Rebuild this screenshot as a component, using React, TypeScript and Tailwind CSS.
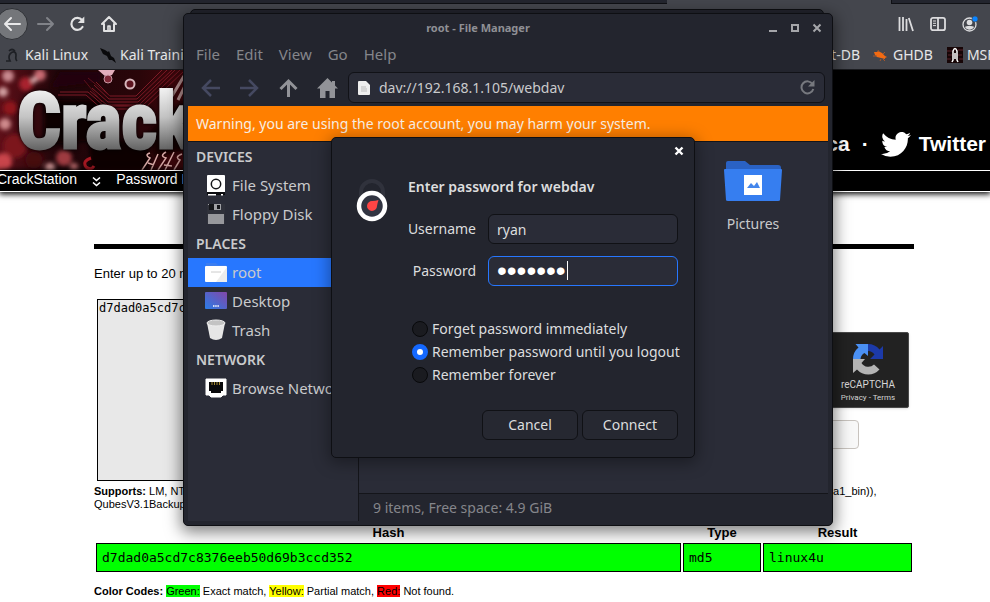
import React from "react";

const ui = "font-['Noto_Sans',sans-serif]";
const arial = "font-['Liberation_Sans',Arial,sans-serif]";
const mono = "font-['DejaVu_Sans_Mono',monospace]";

function BrowserChrome() {
  return (
    <div className={`${ui} bg-[#44464d] text-[#e6e6e8]`}>
      <div className="flex h-1">
        <div className="flex-1 border-b border-[#0f1014] bg-[#23252e]" />
        <div className="w-[224px] bg-[#44464d]" />
        <div className="w-[99px] border-b border-l border-[#0f1014] bg-[#23252e]" />
      </div>
      <div className="flex h-10 items-center justify-between">
        <div className="flex items-center">
          <button aria-label="Back" className="-ml-1 flex size-8 items-center justify-center rounded-full border border-[#2f3136] bg-[#74767a]">
            <svg width="18" height="16" viewBox="0 0 18 16" fill="none" stroke="#e9e9ea" strokeWidth="2" strokeLinecap="round" strokeLinejoin="round"><path d="M17 8H2M8 2L2 8l6 6" /></svg>
          </button>
          <button aria-label="Forward" className="flex size-8 items-center justify-center pl-1">
            <svg width="18" height="16" viewBox="0 0 18 16" fill="none" stroke="#818389" strokeWidth="2" strokeLinecap="round" strokeLinejoin="round"><path d="M1 8h15M10 2l6 6-6 6" /></svg>
          </button>
          <button aria-label="Reload" className="flex size-8 items-center justify-center pl-0.5">
            <svg width="18" height="18" viewBox="0 0 18 18"><path d="M14 5A6 6 0 1 0 14.500 12" fill="none" stroke="#e2e2e3" strokeWidth="2.200" strokeLinecap="round" /><path d="M16.300 1.500v6.500H9.800z" fill="#e2e2e3" /></svg>
          </button>
          <button aria-label="Home" className="flex size-8 items-center justify-center pl-0.5">
            <svg width="18" height="18" viewBox="0 0 18 18" fill="none" stroke="#e2e2e3" strokeWidth="2" strokeLinecap="round" strokeLinejoin="round"><path d="M2 9l7-7 7 7M4 9v7h10V9" /><path d="M8 15v-4h2v4" strokeWidth="1.6" /></svg>
          </button>
        </div>
        <div className="flex items-center gap-4 pr-3">
          <button aria-label="Library">
            <svg width="16" height="16" viewBox="0 0 16 16" stroke="#dcdcde" strokeWidth="1.8"><path d="M1.500 1v14M5 1v14M8.500 3v12M10.800 2l4.200 13" /></svg>
          </button>
          <button aria-label="Sidebars">
            <svg width="16" height="16" viewBox="0 0 16 16" fill="none" stroke="#dcdcde" strokeWidth="1.8"><rect x="1" y="1.800" width="14" height="12.400" rx="2" /><path d="M8 2v12" /><path d="M3 5h3M3 7.300h3M3 9.600h3" strokeWidth="1" /></svg>
          </button>
          <button aria-label="Account">
            <svg width="16" height="16" viewBox="0 0 16 16"><circle cx="7.500" cy="8.500" r="6.500" fill="none" stroke="#dcdcde" strokeWidth="1.300" /><circle cx="7.500" cy="6.500" r="2.800" fill="#dcdcde" /><path d="M3 11c1-1.300 8-1.300 9 0-2 3.600-7 3.600-9 0z" fill="#dcdcde" /><circle cx="13" cy="3" r="3" fill="#0a84ff" stroke="#44464d" strokeWidth=".6" /></svg>
          </button>
        </div>
      </div>
      <div className="flex h-[26px] items-center justify-between overflow-hidden border-b border-[#1b1c20] pb-[3px] text-sm leading-5 whitespace-nowrap">
        <div className="flex items-center">
          <a href="#kali" className="flex items-center gap-[5px] pl-1">
            <svg width="16" height="16" viewBox="0 0 16 16" fill="none" stroke="#1e2025" strokeWidth="1.700"><path d="M2 14h4q-2-4 0-7c2-3 6-3 6 1 0 3-1 4 1 6M5 4q3-3 6 0" /></svg>
            Kali Linux
          </a>
          <a href="#training" className="flex items-center gap-1 pl-3">
            <svg width="16" height="16" viewBox="0 0 16 16" fill="#09090b"><path d="M0 1l5 2 3 2 1-1 2 5 3 2 2 5-4-3-3 0-2-4-4-2z" /></svg>
            Kali Training
          </a>
        </div>
        <div className="flex w-[205px] items-center">
          <span className="w-[75px] shrink-0 text-right">Exploit-DB</span>
          <a href="#ghdb" className="flex shrink-0 items-center gap-[5px] pl-3">
            <svg width="16" height="16" viewBox="0 0 16 16"><path d="M2 5l3 0 1-1 4 2 3 3 2 1-2 1 0 1-4-1-4-1-2-2z" fill="#f26a12" /><path d="M1 9h4M8 14l1-2M13 5l-2 2M6 3l1 2M13 14l-2-2" stroke="#a5572c" /></svg>
            GHDB
          </a>
          <a href="#msfu" className="flex shrink-0 items-center gap-1 pl-[14px]">
            <svg width="16" height="16" viewBox="0 0 16 16"><path fill="#160506" d="M0 0h16v16H0z" /><path stroke="#59232a" d="M0 4h5M1 8h4M11 3h5M11 8h4M0 12h4M12 12h4" /><path d="M5 15l1-2V4q2-5 4 0v9l1 2M8 6v6" stroke="#fff" strokeWidth="1.500" fill="none" /></svg>
            MSFU
          </a>
        </div>
      </div>
    </div>
  );
}

function BannerArt() {
  return (
    <svg width="200" height="100" viewBox="0 0 200 100" aria-label="CrackStation" role="img">
      <defs>
        <linearGradient id="board" x1="0" x2="1"><stop stopColor="#5e0f18" /><stop offset=".3" stopColor="#1c0408" /><stop offset=".7" stopColor="#2a0509" /><stop offset="1" stopColor="#4a080d" /></linearGradient>
        <linearGradient id="steel" gradientUnits="userSpaceOnUse" x1="0" y1="20" x2="0" y2="80"><stop stopColor="#f0f0f0" /><stop offset=".45" stopColor="#c4c4c4" /><stop offset="1" stopColor="#636363" /></linearGradient>
        <filter id="soft"><feGaussianBlur stdDeviation="2.200" /></filter>
      </defs>
      <rect width="200" height="100" fill="url(#board)" />
      <g filter="url(#soft)">
        <circle cx="8" cy="6" r="6" fill="#c98a90" /><circle cx="26" cy="14" r="7" fill="#a8242e" />
        <circle cx="3" cy="22" r="5" fill="#d2a0a2" /><circle cx="40" cy="5" r="6" fill="#c86a72" />
        <circle cx="34" cy="10" r="3" fill="#e0b4b6" /><circle cx="10" cy="38" r="7" fill="#90161f" />
        <circle cx="5" cy="54" r="6" fill="#cf8a8c" /><circle cx="15" cy="76" r="12" fill="#7c141c" />
        <circle cx="3" cy="92" r="9" fill="#c9444c" /><circle cx="34" cy="90" r="9" fill="#47070d" />
        <circle cx="64" cy="88" r="8" fill="#9e3a40" /><circle cx="50" cy="98" r="5" fill="#d69b9b" />
        <circle cx="74" cy="97" r="4" fill="#bb6a6c" />
        <path d="M44 30h60v40l-60 4z" fill="#0c0204" />
        <path d="M90 70h60v30H90z" fill="#0c0204" />
        <path d="M60 2l40 0 0 10-50 6z" fill="#240408" />
        <path d="M150 60l34-30v50l-30 8z" fill="#150306" />
      </g>
      <g fill="none" stroke="#7d1a26" strokeWidth="1">
        <path d="M96 12l14 14h26l26-26M94 15l15 14h28l30-29M92 18l16 14h30l34-32M90 21l17 14h32l36-35M60 22h28l16 14h38l38-36M58 25h28l16 14h42l40-38" />
        <path d="M84 10l18 22M88 8l22 18" stroke="#5c101a" />
      </g>
      <path d="M98 0l8 7 6-2 3-5z" fill="#e4aebb" />
      <circle cx="108" cy="9" r="4" fill="#7e2735" stroke="#c998a4" />
      <circle cx="130" cy="14" r="4.500" fill="#5e1520" stroke="#d6b6bb" strokeWidth="2" />
      <path d="M172 26l12-20M178 30l8-16" stroke="#b99494" strokeWidth="3" />
      <path d="M91 88q-9 3-5 9 5 4 8-1" fill="none" stroke="#a51822" strokeWidth="3" />
      <g fill="none" stroke="#d8a9a6" strokeWidth="1.500"><path d="M150 83q-6 2 0 5l-8 12M158 84l-7 16M166 82q-7 4 0 6l-8 12M174 82l-9 18M182 84q-8 3-2 6l-6 10M148 93l6 2M164 95l8 1" /></g>
      <text x="17" y="78" fontSize="77" fontWeight="700" fill="url(#steel)" stroke="url(#steel)" strokeWidth="3" className="font-['Liberation_Sans_Narrow','Roboto_Condensed','Open_Sans_Condensed',sans-serif] drop-shadow-[0_0_2px_#000]">Crack</text>
    </svg>
  );
}

function SiteHeader() {
  return (
    <header className={`${arial} bg-black text-white`}>
      <div className="flex h-[100px] items-center justify-between">
        <BannerArt />
        <div className="flex items-center gap-3 pt-12 pr-1 text-[21px] leading-6 font-bold">
          <a href="#defuse">Defuse.ca</a>
          <span>·</span>
          <a href="#twitter" className="flex items-center gap-2">
            <svg width="30" height="25" viewBox="0 0 24 20" fill="#fff"><path d="M24 2.400a9.800 9.800 0 0 1-2.800.8A4.900 4.900 0 0 0 23.300.5a9.900 9.900 0 0 1-3.100 1.200A4.900 4.900 0 0 0 11.800 6.200 14 14 0 0 1 1.700 1a4.900 4.900 0 0 0 1.500 6.600A4.900 4.900 0 0 1 1 7v.1a4.900 4.900 0 0 0 3.900 4.800 4.900 4.900 0 0 1-2.200.1 4.900 4.900 0 0 0 4.600 3.400A9.900 9.900 0 0 1 0 17.500 14 14 0 0 0 7.500 19.700c9.100 0 14-7.500 14-14v-.7A10 10 0 0 0 24 2.400z" /></svg>
            Twitter
          </a>
        </div>
      </div>
      <nav className="relative flex h-[22px] items-center border-y border-white bg-black text-sm leading-4 whitespace-nowrap shadow-[0_1px_6px_1px_#000]">
        <a href="#crackstation" className="-ml-[3px] pb-1">CrackStation</a>
        <svg className="mx-[15px]" width="9" height="11" viewBox="0 0 9 11" fill="none" stroke="#fff" strokeWidth="1.600"><path d="M1 1.500l3.500 3 3.500-3M1 6.500l3.500 3 3.500-3" /></svg>
        <a href="#hashing" className="pb-1">Password Hashing Security</a>
      </nav>
    </header>
  );
}

function CrackForm() {
  return (
    <form className="mt-[15px] flex justify-between pr-[5px] pl-[3px]" onSubmit={(e) => e.preventDefault()}>
      <textarea id="hashes" defaultValue="d7dad0a5cd7c8376eeb50d69b3ccd352" className={`${mono} block h-[182px] w-[480px] resize-none border border-black bg-[#e8e8e8] px-px py-px text-xs leading-[14px] text-black outline-none`} />
      <div className="flex w-[304px] flex-col items-center pt-[33px]">
        <div className="flex h-[76px] w-full flex-col items-end rounded-xs border border-[#4a4a4a] bg-[#222] text-[#d6d6d6] shadow-sm">
          <div className="flex w-20 flex-col items-center pt-[10px] font-['Roboto',sans-serif]">
            <svg width="32" height="32" viewBox="0 0 32 32">
              <path d="M16 1a15 15 0 0 1 11.500 5.500L31 3v13H18l4.500-4.500A8 8 0 0 0 16 8z" fill="#1c3aa9" />
              <path d="M16 1v12l-3.500-3A8 8 0 0 0 8.500 16H1A15 15 0 0 1 6.500 4.500L3.500 1z" fill="#4a90f4" />
              <path d="M1 16h12l-3.500 4a8 8 0 0 0 12.500 1.500l5.500 5A15 15 0 0 1 5 26.500L1 30z" fill="#b4b4b4" />
            </svg>
            <span className="mt-1 text-[10px] leading-3">reCAPTCHA</span>
            <span className="text-[8px] leading-[14px] whitespace-nowrap">
              <a href="#privacy">Privacy</a> - <a href="#terms">Terms</a>
            </span>
          </div>
        </div>
        <button className="mt-3 h-[29px] w-[204px] rounded-[4px] border border-[#c8c3be] bg-[#f8f8f8] text-[13px] text-black">Crack Hashes</button>
      </div>
    </form>
  );
}

function CrackPage() {
  const cell = "h-[29px] border border-black bg-[#00ff00] px-[5px] py-0";
  return (
    <main className={`${arial} bg-white pr-[76px] pl-[94px] text-black`}>
      <div className="h-[52px]" />
      <hr className="h-[5px] border-0 bg-black" />
      <label htmlFor="hashes" className="mt-[15px] block text-[13px] leading-5">Enter up to 20 non-salted hashes, one per line:</label>
      <CrackForm />
      <p className="mt-1 text-[11px] leading-[13px]">
        <b>Supports:</b> LM, NTLM, md2, md4, md5, md5(md5_hex), md5-half, sha1, sha224, sha256, sha384, sha512, ripeMD160, whirlpool, MySQL 4.1+ (sha1(sha1_bin)), QubesV3.1BackupDefaults
      </p>
      <table className="mt-[11px] w-full table-fixed border-separate border-spacing-[2px]">
        <colgroup>
          <col />
          <col className="w-[78px]" />
          <col className="w-[149px]" />
        </colgroup>
        <thead>
          <tr className="text-[13px] leading-[17px]">
            <th className="p-0">Hash</th>
            <th className="p-0">Type</th>
            <th className="p-0">Result</th>
          </tr>
        </thead>
        <tbody>
          <tr className={`${mono} text-[13px] leading-4`}>
            <td className={cell}>d7dad0a5cd7c8376eeb50d69b3ccd352</td>
            <td className={cell}>md5</td>
            <td className={cell}>linux4u</td>
          </tr>
        </tbody>
      </table>
      <p className="mt-[9px] text-[11px] leading-4">
        <b>Color Codes:</b> <span className="bg-[#00ff00]">Green:</span> Exact match, <span className="bg-[#ffff00]">Yellow:</span> Partial match, <span className="bg-[#ff0000]">Red:</span> Not found.
      </p>
    </main>
  );
}

const DriveIcon = () => (
  <svg width="22" height="22" viewBox="0 0 22 22"><rect x="2" y="1" width="18" height="18" rx="1" fill="#fff" /><circle cx="11" cy="10" r="4.700" fill="none" stroke="#15161a" strokeWidth="1.500" /><path d="M2 18h18v3H2z" fill="#0c0d10" /><path d="M3 20h8v1.500H3zM16 20h2v1.500h-2z" fill="#fff" /></svg>
);
const FloppyIcon = () => (
  <svg width="22" height="22" viewBox="0 0 22 22"><path d="M2 1h18v20H2z" fill="#2f313a" /><path d="M3 1h1v1H3zM8 1h8v6H8z" fill="#a0a1a5" /><path d="M4 1h5v6H4zM12 2h3v4h-3z" fill="#15161a" /><rect x="3" y="11" width="16" height="10" fill="#97989c" /></svg>
);
const FolderIcon = () => (
  <svg width="22" height="22" viewBox="0 0 22 22"><path d="M1 2h10l2 2h8v3H1z" fill="#3b7df0" /><rect y="5" width="22" height="16" rx="1" fill="#fff" /><path d="M22 6v15H11z" fill="#ececec" /><path d="M6 11h10" stroke="#ccc" /></svg>
);
const DesktopIcon = () => (
  <svg width="22" height="22" viewBox="0 0 22 22"><defs><linearGradient id="desk" x1="0" y1="1" x2="1" y2="0"><stop stopColor="#2a7de8" /><stop offset="1" stopColor="#8347a8" /></linearGradient></defs><rect y="2" width="22" height="17" rx="1" fill="url(#desk)" /><path d="M8 16h6" stroke="#fff" strokeWidth="1.500" strokeDasharray="1.500 .7" /></svg>
);
const TrashIcon = () => (
  <svg width="22" height="22" viewBox="0 0 22 22"><path d="M2 4l3 15q6 4 12 0l3-15z" fill="#e6e6e6" /><ellipse cx="11" cy="4" rx="9" ry="3" fill="#c3c3c3" stroke="#eee" /></svg>
);
const NetworkIcon = () => (
  <svg width="22" height="22" viewBox="0 0 22 22"><path d="M1 2h20v16h-3l-2 2H6l-2-2H1z" fill="#fff" stroke="#fff" strokeLinejoin="round" /><path d="M4 5h14v9h-2v2H6v-2H4z" fill="#09090b" /><path d="M7 5v3M9.500 5v3M12 5v3M14.500 5v3" stroke="#a58a32" /></svg>
);

type Entry = { label: string; icon?: React.ReactNode; selected?: boolean };
const places: Entry[] = [
  { label: "DEVICES" },
  { label: "File System", icon: <DriveIcon /> },
  { label: "Floppy Disk", icon: <FloppyIcon /> },
  { label: "PLACES" },
  { label: "root", icon: <FolderIcon />, selected: true },
  { label: "Desktop", icon: <DesktopIcon /> },
  { label: "Trash", icon: <TrashIcon /> },
  { label: "NETWORK" },
  { label: "Browse Network", icon: <NetworkIcon /> },
];

function Sidebar() {
  return (
    <aside className="w-[171px] shrink-0 overflow-hidden border-r border-[#14151a] bg-[#2a2c37] text-[15px] whitespace-nowrap">
      {places.map((p) =>
        p.icon ? (
          <button key={p.label} className={`flex h-[29px] w-full items-center gap-[5px] pb-0.5 pl-[17px] ${p.selected ? "bg-[#2777ff]" : ""}`}>
            {p.icon}
            {p.label}
          </button>
        ) : (
          <h2 key={p.label} className="h-[29px] pl-2 text-sm leading-[29px] font-semibold">{p.label}</h2>
        ),
      )}
    </aside>
  );
}

function FileManager() {
  return (
    <section className={`${ui} absolute top-[13px] left-[183px] flex h-[513px] w-[650px] flex-col rounded-[5px] border border-[#0e0f13] bg-[#23252e] px-1 pb-1 text-sm leading-5 text-[#c9cacc] shadow-[0_4px_16px_2px_rgba(0,0,0,0.5)]`}>
      <div className="flex h-[27px] items-center text-[11px] font-bold text-[#8f9095]">
        <h1 className="flex-1 text-center">root - File Manager</h1>
        <div className="flex items-center gap-3 pr-1.5">
          <button aria-label="Minimize"><svg width="10" height="10" viewBox="0 0 10 10"><path d="M1 7h8v2H1z" fill="#a5a6aa" /></svg></button>
          <button aria-label="Maximize"><svg width="10" height="10" viewBox="0 0 10 10"><path d="M2 2h6v6H2z" fill="none" stroke="#a5a6aa" strokeWidth="2" /></svg></button>
          <button aria-label="Close"><svg width="10" height="10" viewBox="0 0 10 10"><path d="M1.500 1.500l7 7M8.500 1.500l-7 7" stroke="#a5a6aa" strokeWidth="2" /></svg></button>
        </div>
      </div>
      <nav className="flex h-[28px] items-center gap-4 pb-0.5 pl-2 text-[15px] text-[#85868b]">
        <button>File</button>
        <button>Edit</button>
        <button>View</button>
        <button>Go</button>
        <button>Help</button>
      </nav>
      <div className="flex h-[37px] items-center pr-[3px] pt-px pb-px">
        <div className="flex w-[160px] items-center gap-[18px] pl-3">
          <button aria-label="Back"><svg width="21" height="20" viewBox="0 0 21 20" fill="none" stroke="#454961" strokeWidth="2.500"><path d="M20 10H3M11 2l-8 8 8 8" /></svg></button>
          <button aria-label="Forward"><svg width="21" height="20" viewBox="0 0 21 20" fill="none" stroke="#454961" strokeWidth="2.500"><path d="M1 10h17M10 2l8 8-8 8" /></svg></button>
          <button aria-label="Up"><svg width="21" height="20" viewBox="0 0 21 20" fill="none" stroke="#929398" strokeWidth="3"><path d="M10.500 19V3M2.500 11l8-8 8 8" /></svg></button>
          <button aria-label="Home"><svg width="21" height="20" viewBox="0 0 21 20"><path d="M10.500 0L0 10.500h3V20h5.500v-7h4v7H18v-9.500h3L18 7.500V3h-3v1.500z" fill="#929398" /></svg></button>
        </div>
        <div className="flex h-[31px] flex-1 items-center gap-[9px] rounded-md border border-[#111217] bg-[#2a2c37] px-[9px]">
          <svg width="12" height="14" viewBox="0 0 12 14"><path d="M1 0h7l4 4v9q0 1-1 1H1q-1 0-1-1V1q0-1 1-1z" fill="#eee" /><path d="M3 6h5M3 8h6M3 10h6" stroke="#bbb" /></svg>
          <input aria-label="Location" defaultValue="dav://192.168.1.105/webdav" className="min-w-0 flex-1 bg-transparent outline-none" />
          <svg width="15" height="15" viewBox="0 0 15 15"><path d="M12.500 4A6 6 0 1 0 13.300 9" fill="none" stroke="#77797f" strokeWidth="2" /><path d="M14.500 0v6.500H8z" fill="#77797f" /></svg>
        </div>
      </div>
      <p className="h-9 border-b border-[#14151a] bg-[#ff7f00] pl-2 leading-[35px] text-[#f8eee2]">Warning, you are using the root account, you may harm your system.</p>
      <div className="flex min-h-0 flex-1">
        <Sidebar />
        <div className="flex flex-1 flex-col">
          <div className="flex-1 bg-[#2a2c37] pt-[19px] pr-[30px]">
            <figure className="ml-auto flex w-[90px] flex-col items-center gap-3">
              <svg width="58" height="41" viewBox="0 0 58 41"><path d="M2 2q0-2 2-2h17l5 4h28q3 0 3 3v4H2z" fill="#2a62c4" /><path d="M1 8h56q1 0 1 1l-2 30q0 1-2 1H4q-2 0-2-1L0 9q0-1 1-1z" fill="#367ef0" /><path d="M20 14h18v20H20z" fill="#fff" /><path d="M23 27l4-5 3 3 3-4 3 6z" fill="#4486ec" /></svg>
              <figcaption>Pictures</figcaption>
            </figure>
          </div>
          <footer className="h-7 border-t border-[#14151a] pl-[14px] leading-[28px] text-[#85868b]">9 items, Free space: 4.9 GiB</footer>
        </div>
      </div>
    </section>
  );
}

const radios = ["Forget password immediately", "Remember password until you logout", "Remember forever"];

function PasswordDialog() {
  const field = "h-[30px] w-[190px] rounded-md border bg-[#2a2c37] px-2 outline-none";
  const button = "h-[30px] w-24 rounded-md border border-[#101115] bg-[#262831]";
  return (
    <form role="dialog" aria-label="Enter password for webdav" onSubmit={(e) => e.preventDefault()} className={`${ui} absolute top-[137px] left-[331px] w-[364px] rounded-[5px] border border-[#0e0f13] bg-[#23252e] pr-4 pb-[17px] text-sm leading-5 text-[#dcddde] shadow-[0_3px_16px_2px_rgba(0,0,0,0.35)]`}>
      <div className="flex h-[26px] items-center justify-end">
        <button type="button" aria-label="Close" className="-mr-[6px]">
          <svg width="10" height="10" viewBox="0 0 10 10"><path d="M1.500 1.500l7 7M8.500 1.500l-7 7" stroke="#fff" strokeWidth="2.400" /></svg>
        </button>
      </div>
      <div className="flex pt-[13px] pl-6">
        <svg className="mt-px shrink-0" width="32" height="44" viewBox="0 0 32 44">
          <path d="M5 20v-6a11 11 0 0 1 22 0v6" fill="none" stroke="#30323c" strokeWidth="4" />
          <circle cx="16" cy="28" r="13" fill="#323542" stroke="#fff" strokeWidth="4.500" />
          <path d="M22.500 22q-1 3-1.500 6a5 5 0 1 1-4.500-5q3 0 6-1z" fill="#ff4545" />
        </svg>
        <div className="min-w-0 flex-1 pl-5">
          <h2 className="text-sm leading-5 font-semibold">Enter password for webdav</h2>
          <div className="mt-[17px] flex items-center justify-end gap-3">
            <label htmlFor="user">Username</label>
            <input id="user" defaultValue="ryan" className={`${field} border-[#101115]`} />
          </div>
          <div className="mt-3 flex items-center justify-end gap-3">
            <label htmlFor="pass">Password</label>
            <div className="relative">
              <input id="pass" type="password" defaultValue="linux4u" className={`${field} block border-[#2777ff] font-['Liberation_Sans',sans-serif] text-[28px] text-white`} />
              <span className="absolute top-[5px] left-[79px] h-[19px] w-px bg-white" />
            </div>
          </div>
        </div>
      </div>
      <fieldset className="mt-[31px] pl-20">
        {radios.map((r, i) => (
          <label key={r} className="flex h-[23px] items-center gap-1 whitespace-nowrap">
            <input type="radio" name="remember" defaultChecked={i === 1} className="size-4 appearance-none rounded-full border border-[#08090b] bg-[#1a1b20] checked:border-[5px] checked:border-[#1468ff] checked:bg-white" />
            {r}
          </label>
        ))}
      </fieldset>
      <div className="mt-6 flex justify-end gap-1">
        <button type="button" className={button}>Cancel</button>
        <button type="submit" className={button}>Connect</button>
      </div>
    </form>
  );
}

export default function App() {
  return (
    <div className="relative min-h-screen overflow-hidden bg-white">
      <BrowserChrome />
      <SiteHeader />
      <CrackPage />
      <div className="absolute top-[9px] left-[190px] h-10 w-[634px] rounded-[5px] border border-[#0e0f13] bg-[#23252e]" />
      <FileManager />
      <PasswordDialog />
    </div>
  );
}
